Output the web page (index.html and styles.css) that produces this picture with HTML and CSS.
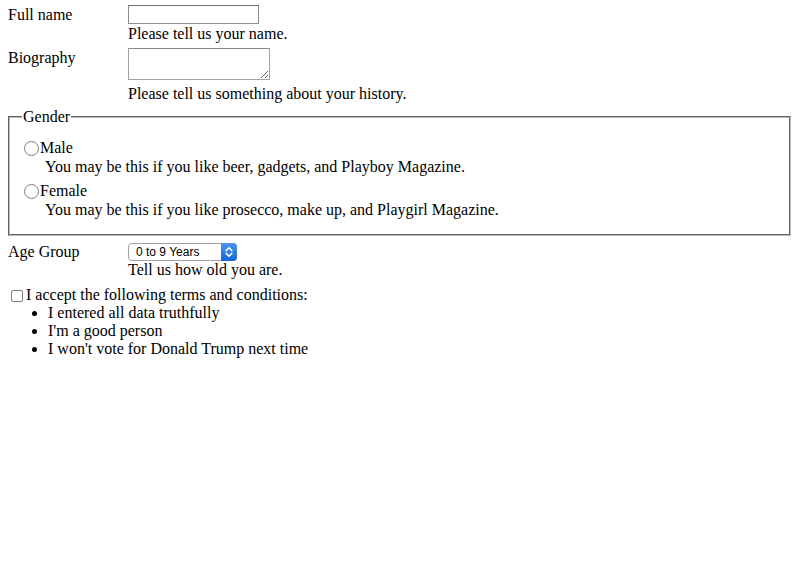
FILE: index.html
```html
<!DOCTYPE html>
<html lang="en">
<head>
<meta charset="utf-8">
<title>Form</title>
<link rel="stylesheet" href="styles.css">
</head>
<body>
<form class="form">
  <div class="row">
    <label class="label" for="fullname">Full name</label>
    <div class="field">
      <input class="text-input" id="fullname" type="text">
      <div class="hint">Please tell us your name.</div>
    </div>
  </div>
  <div class="row">
    <label class="label" for="bio">Biography</label>
    <div class="field">
      <textarea class="textarea" id="bio"></textarea>
      <div class="hint">Please tell us something about your history.</div>
    </div>
  </div>
  <fieldset class="group">
    <legend class="legend">Gender</legend>
    <div class="option option-first">
      <label class="option-label"><input class="radio" type="radio" name="gender">Male</label>
      <div class="option-desc">You may be this if you like beer, gadgets, and Playboy Magazine.</div>
    </div>
    <div class="option">
      <label class="option-label"><input class="radio" type="radio" name="gender">Female</label>
      <div class="option-desc">You may be this if you like prosecco, make up, and Playgirl Magazine.</div>
    </div>
  </fieldset>
  <div class="row">
    <label class="label label-select" for="age">Age Group</label>
    <div class="field">
      <div class="select-wrap">
        <select class="select" id="age">
          <option>0 to 9 Years</option>
          <option>10 to 19 Years</option>
          <option>20 to 29 Years</option>
        </select>
        <span class="select-arrow">
          <svg width="8" height="12" viewBox="0 0 8 12"><path d="M1.2 4.6 L4 1.8 L6.8 4.6" fill="none" stroke="#fff" stroke-width="1.5" stroke-linecap="round" stroke-linejoin="round"/><path d="M1.2 7.4 L4 10.2 L6.8 7.4" fill="none" stroke="#fff" stroke-width="1.5" stroke-linecap="round" stroke-linejoin="round"/></svg>
        </span>
      </div>
      <div class="hint">Tell us how old you are.</div>
    </div>
  </div>
  <div class="terms">
    <label class="terms-label"><input class="checkbox" type="checkbox">I accept the following terms and conditions:</label>
    <ul class="terms-list">
      <li>I entered all data truthfully</li>
      <li>I'm a good person</li>
      <li>I won't vote for Donald Trump next time</li>
    </ul>
  </div>
</form>
</body>
</html>
```

FILE: styles.css
```css
html, body {
  margin: 0;
  background: #fff;
}
body {
  font-family: "Liberation Serif", "Times New Roman", serif;
  font-size: 16px;
  line-height: 18px;
  color: #000;
}
.form {
  display: flex;
  flex-direction: column;
  gap: 5px;
  padding: 5px 8px 0 8px;
}
.row {
  display: flex;
  align-items: flex-start;
}
.label {
  width: 120px;
  flex: none;
  padding-top: 1px;
}
.label-select {
  padding-top: 2px;
}
.field {
  display: flex;
  flex-direction: column;
  align-items: flex-start;
}
.hint {
  height: 18px;
}
.text-input {
  display: block;
  box-sizing: border-box;
  width: 131px;
  height: 19px;
  margin: 0 0 1px 0;
  padding: 1px 2px;
  border: 1px solid #8c8c8c;
  border-top-color: #6f6f6f;
  background: #fff;
  font: 13px "Liberation Sans", sans-serif;
  outline: none;
}
.textarea {
  display: block;
  box-sizing: border-box;
  width: 142px;
  height: 32px;
  margin: 0 0 5px 0;
  padding: 2px;
  border: 1px solid #a3a3a3;
  border-top-color: #8a8a8a;
  background: #fff;
  font: 13px "Liberation Mono", monospace;
  resize: both;
  outline: none;
}
.group {
  margin: 0;
  padding: 0 12px 15px 12px;
  border: 2px groove #b8b8b8;
}
.legend {
  padding: 0 1px;
}
.option-first {
  margin-top: 12px;
}
.option + .option {
  margin-top: 5px;
}
.option-label {
  display: flex;
  align-items: center;
  height: 20px;
}
.radio {
  appearance: none;
  -webkit-appearance: none;
  box-sizing: border-box;
  width: 15px;
  height: 15px;
  margin: 1px 1px 0 2px;
  border: 1px solid #7d7d7d;
  border-radius: 50%;
  background: #fff;
}
.option-desc {
  padding-left: 23px;
}
.select-wrap {
  position: relative;
  margin-top: 2px;
  width: 109px;
  height: 18px;
}
.select {
  appearance: none;
  -webkit-appearance: none;
  box-sizing: border-box;
  display: block;
  width: 109px;
  height: 18px;
  margin: 0;
  padding: 0 0 0 7px;
  border: 1px solid #a2a2a2;
  border-radius: 4px;
  background: #fff;
  font: 12px "Liberation Sans", Arial, sans-serif;
  color: #000;
  outline: none;
}
.select-arrow {
  position: absolute;
  top: 0;
  right: 0;
  width: 16px;
  height: 18px;
  border-radius: 0 4px 4px 0;
  background: linear-gradient(#4c97f0, #1466d6);
  display: flex;
  align-items: center;
  justify-content: center;
  pointer-events: none;
}
.select-arrow svg {
  display: block;
}
.terms {
  margin-top: 2px;
}
.terms-label {
  display: flex;
  align-items: center;
  height: 18px;
}
.checkbox {
  appearance: none;
  -webkit-appearance: none;
  box-sizing: border-box;
  width: 12px;
  height: 12px;
  margin: 1px 3px 0 3px;
  border: 1px solid #7d7d7d;
  border-radius: 2px;
  background: #fff;
}
.terms-list {
  margin: 0;
  padding-left: 40px;
}
```
